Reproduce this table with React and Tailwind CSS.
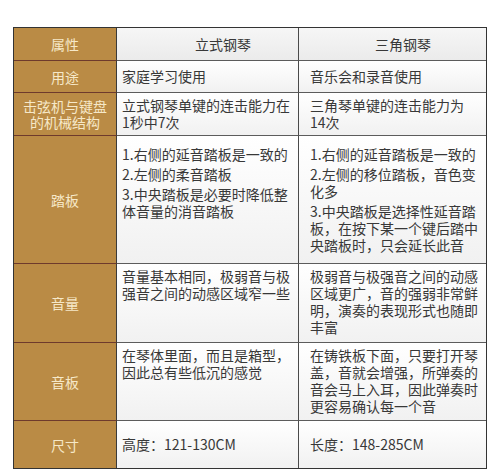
import React from "react";

const font = { fontFamily: '"Noto Sans CJK SC", "Noto Sans", sans-serif' };

function Label({ children, last }) {
  return (
    <div
      className={`flex items-center justify-center bg-[#ba8b45] text-[#f6e8c8] text-[14px] leading-[16px] text-center border-r border-r-[#3a3a3a] ${
        last ? "" : "border-b border-b-[#6e3a2c]"
      }`}
    >
      {children}
    </div>
  );
}

function Cell({ children, className = "", last, header }) {
  return (
    <div
      className={`text-[14px] leading-[17px] text-[#383838] ${
        header
          ? "bg-gradient-to-b from-[#f6f6f6] to-[#ebebeb]"
          : "bg-gradient-to-b from-white to-[#f1f1f1]"
      } ${last ? "" : "border-b border-b-[#5c5c5c]"} ${className}`}
    >
      {children}
    </div>
  );
}

export default function App() {
  return (
    <div className="w-[500px] h-[470px] bg-white pt-[27px] pl-[13px]" style={font}>
      <div className="w-[474px] border border-[#333] grid grid-cols-[103px_182px_187px] grid-rows-[33px_32px_43px_128px_79px_78px_47px] whitespace-nowrap">
        {/* header */}
        <Label>属性</Label>
        <Cell header className="flex items-center pl-[78px] border-r border-r-[#4a4a4a]">
          立式钢琴
        </Cell>
        <Cell header className="flex items-center pl-[76px]">
          三角钢琴
        </Cell>

        {/* 用途 */}
        <Label>用途</Label>
        <Cell className="flex items-center pl-[5px] border-r border-r-[#4a4a4a]">
          家庭学习使用
        </Cell>
        <Cell className="flex items-center pl-[11px]">音乐会和录音使用</Cell>

        {/* 击弦机 */}
        <Label>
          击弦机与键盘
          <br />
          的机械结构
        </Label>
        <Cell className="flex items-center pl-[5px] border-r border-r-[#4a4a4a]">
          <div>
            立式钢琴单键的连击能力在
            <br />
            1秒中7次
          </div>
        </Cell>
        <Cell className="flex items-center pl-[11px]">
          <div>
            三角琴单键的连击能力为
            <br />
            14次
          </div>
        </Cell>

        {/* 踏板 */}
        <Label>踏板</Label>
        <Cell className="pt-[10px] pl-[5px] border-r border-r-[#4a4a4a]">
          <p>1.右侧的延音踏板是一致的</p>
          <p className="mt-[3px]">2.左侧的柔音踏板</p>
          <p className="mt-[3px]">
            3.中央踏板是必要时降低整
            <br />
            体音量的消音踏板
          </p>
        </Cell>
        <Cell className="pt-[10px] pl-[11px]">
          <p>1.右侧的延音踏板是一致的</p>
          <p className="mt-[3px]">
            2.左侧的移位踏板，音色变
            <br />
            化多
          </p>
          <p className="mt-[3px]">
            3.中央踏板是选择性延音踏
            <br />
            板，在按下某一个键后踏中
            <br />
            央踏板时，只会延长此音
          </p>
        </Cell>

        {/* 音量 */}
        <Label>音量</Label>
        <Cell className="pt-[4px] pl-[5px] border-r border-r-[#4a4a4a]">
          音量基本相同，极弱音与极
          <br />
          强音之间的动感区域窄一些
        </Cell>
        <Cell className="pt-[4px] pl-[11px]">
          极弱音与极强音之间的动感
          <br />
          区域更广，音的强弱非常鲜
          <br />
          明，演奏的表现形式也随即
          <br />
          丰富
        </Cell>

        {/* 音板 */}
        <Label>音板</Label>
        <Cell className="pt-[4px] pl-[5px] border-r border-r-[#4a4a4a]">
          在琴体里面，而且是箱型，
          <br />
          因此总有些低沉的感觉
        </Cell>
        <Cell className="pt-[4px] pl-[11px]">
          在铸铁板下面，只要打开琴
          <br />
          盖，音就会增强，所弹奏的
          <br />
          音会马上入耳，因此弹奏时
          <br />
          更容易确认每一个音
        </Cell>

        {/* 尺寸 */}
        <Label last>尺寸</Label>
        <Cell last className="flex items-center pl-[5px] border-r border-r-[#4a4a4a]">
          高度：121-130CM
        </Cell>
        <Cell last className="flex items-center pl-[11px]">
          长度：148-285CM
        </Cell>
      </div>
    </div>
  );
}
